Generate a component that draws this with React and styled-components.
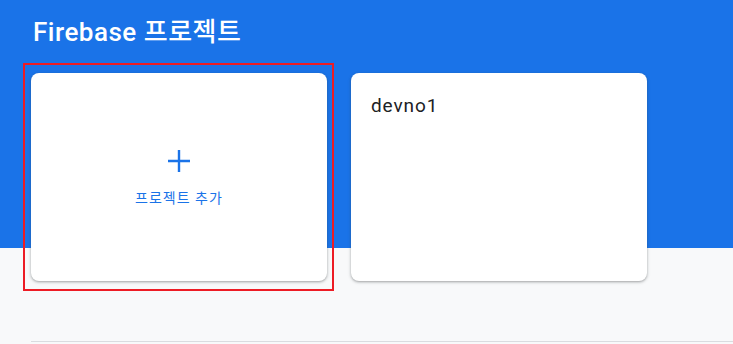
import React from 'react';
import styled, { createGlobalStyle } from 'styled-components';

const GlobalStyle = createGlobalStyle`
  html, body {
    margin: 0;
    padding: 0;
    background: #f8f9fa;
    font-family: Roboto, "Noto Sans CJK KR", sans-serif;
  }
`;

const Page = styled.div`
  width: 733px;
  height: 344px;
  overflow: hidden;
  background: linear-gradient(#1a73e8 0, #1a73e8 248px, #f8f9fa 248px);
  padding: 0 0 0 31px;
  box-sizing: border-box;
  display: flex;
  flex-direction: column;
`;

const Title = styled.h1`
  margin: 0;
  padding: 16px 0 0 2px;
  height: 73px;
  box-sizing: border-box;
  font-size: 26px;
  line-height: 32px;
  font-weight: 500;
  letter-spacing: 0.5px;
  color: #fff;
  font-family: Roboto, "Noto Sans CJK KR", sans-serif;
`;

const CardRow = styled.div`
  display: flex;
  gap: 24px;
`;

const Card = styled.div`
  position: relative;
  width: 296px;
  height: 208px;
  box-sizing: border-box;
  background: #fff;
  border-radius: 8px;
  box-shadow: 0 1px 2px rgba(60, 64, 67, 0.3), 0 1px 3px 1px rgba(60, 64, 67, 0.15);
  cursor: pointer;

  ${(p) =>
    p.$selected &&
    `
    &::after {
      content: '';
      position: absolute;
      top: -10px;
      left: -8px;
      right: -7px;
      bottom: -10px;
      border: 2px solid #ed1c24;
      pointer-events: none;
    }
  `}
`;

const AddCard = styled(Card)`
  display: flex;
  flex-direction: column;
  align-items: center;
  justify-content: center;
  gap: 16px;
  padding-top: 4px;
  color: #1a73e8;
`;

const AddLabel = styled.div`
  font-size: 14px;
  line-height: 20px;
  letter-spacing: 1px;
`;

const ProjectCard = styled(Card)`
  padding: 21px 20px;
`;

const ProjectName = styled.div`
  font-size: 19px;
  line-height: 24px;
  color: #202124;
  letter-spacing: 0.9px;
`;

const Footer = styled.div`
  margin-top: auto;
  height: 2px;
  border-top: 1px solid #dadce0;
`;

const PlusIcon = () => (
  <svg width="22" height="22" viewBox="0 0 22 22">
    <path d="M11 0v22M0 11h22" stroke="#1a73e8" strokeWidth="2.4" fill="none" />
  </svg>
);

export default function App() {
  return (
    <>
      <GlobalStyle />
      <Page>
        <Title>Firebase 프로젝트</Title>
        <CardRow>
          <AddCard $selected>
            <PlusIcon />
            <AddLabel>프로젝트 추가</AddLabel>
          </AddCard>
          <ProjectCard>
            <ProjectName>devno1</ProjectName>
          </ProjectCard>
        </CardRow>
        <Footer />
      </Page>
    </>
  );
}
